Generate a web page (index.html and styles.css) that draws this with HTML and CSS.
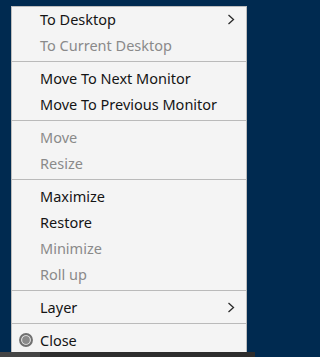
FILE: index.html
```html
<!DOCTYPE html>
<html>
<head>
<meta charset="utf-8">
<link rel="stylesheet" href="styles.css">
</head>
<body>
<div class="screen">
  <div class="menu">
    <div class="item"><span class="label">To Desktop</span><svg class="chev" width="8" height="11" viewBox="0 0 8 11"><polyline points="1.5,1 6.5,5.5 1.5,10" fill="none" stroke="#2b2b2b" stroke-width="1.3"/></svg></div>
    <div class="item disabled"><span class="label">To Current Desktop</span></div>
    <div class="sep"></div>
    <div class="item"><span class="label">Move To Next Monitor</span></div>
    <div class="item"><span class="label">Move To Previous Monitor</span></div>
    <div class="sep"></div>
    <div class="item disabled"><span class="label">Move</span></div>
    <div class="item disabled"><span class="label">Resize</span></div>
    <div class="sep"></div>
    <div class="item"><span class="label">Maximize</span></div>
    <div class="item"><span class="label">Restore</span></div>
    <div class="item disabled"><span class="label">Minimize</span></div>
    <div class="item disabled"><span class="label">Roll up</span></div>
    <div class="sep"></div>
    <div class="item"><span class="label">Layer</span><svg class="chev" width="8" height="11" viewBox="0 0 8 11"><polyline points="1.5,1 6.5,5.5 1.5,10" fill="none" stroke="#2b2b2b" stroke-width="1.3"/></svg></div>
    <div class="sep"></div>
    <div class="item"><svg class="icon" width="14" height="14" viewBox="0 0 14 14"><circle cx="7" cy="7" r="5.9" fill="#f4f4f4" stroke="#707070" stroke-width="2.1"/><circle cx="7" cy="7" r="3.9" fill="#8a8a8a"/></svg><span class="label">Close</span></div>
  </div>
  <div class="taskbar"><div class="task"></div></div>
</div>
</body>
</html>
```
FILE: styles.css
```css
html, body {
  margin: 0;
  padding: 0;
  background: #002a50;
}
body {
  width: 255px;
  height: 357px;
  overflow: hidden;
  font-family: "Noto Sans", "DejaVu Sans", sans-serif;
}
.screen {
  position: relative;
  width: 255px;
  height: 357px;
  overflow: hidden;
  padding: 6px 0 0 11px;
  box-sizing: border-box;
}
.menu {
  width: 236px;
  box-sizing: border-box;
  background: #f4f4f4;
  border: 1px solid #bdbdbd;
  display: flex;
  flex-direction: column;
}
.item {
  height: 26px;
  box-sizing: border-box;
  padding-bottom: 2px;
  display: flex;
  align-items: center;
  position: relative;
  padding-left: 28px;
  padding-right: 10px;
  font-size: 14.5px;
  color: #151515;
}
.item.disabled {
  color: #8a8a8a;
}
.label {
  flex: 1;
  white-space: nowrap;
  line-height: 22px;
}
.chev {
  margin-right: 1px;
}
.icon {
  position: absolute;
  left: 7px;
  top: 5px;
}
.sep {
  height: 1px;
  background: #bababa;
  margin: 2px 0 4px;
}
.taskbar {
  position: absolute;
  left: 0;
  right: 0;
  bottom: 0;
  height: 5px;
  background: #2d2d2d;
}
.task {
  width: 40px;
  height: 5px;
  background: #454545;
}
```
